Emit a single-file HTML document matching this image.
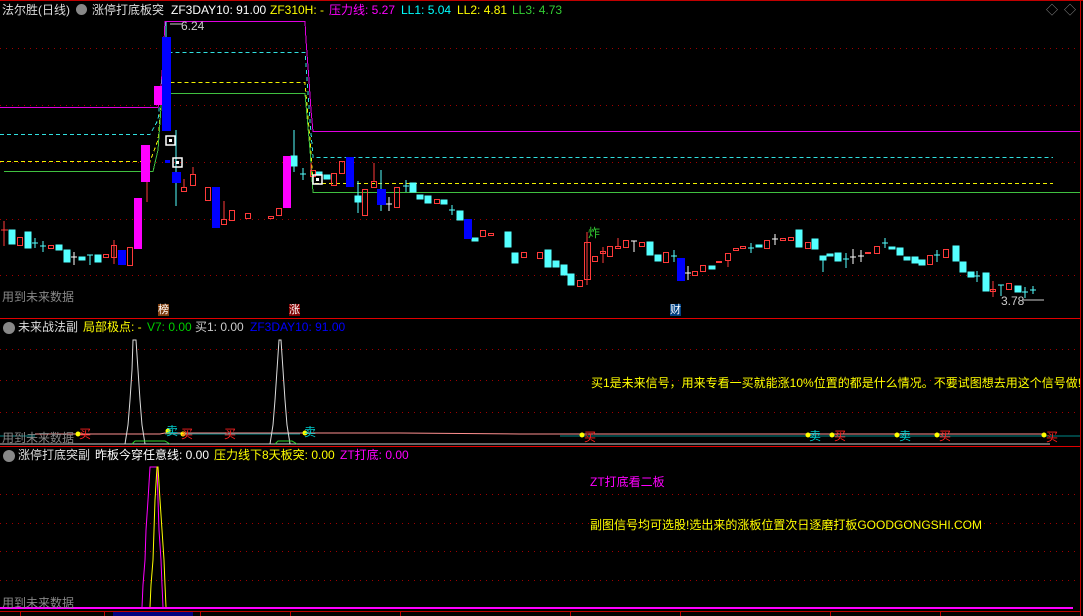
<!DOCTYPE html>
<html><head><meta charset="utf-8"><style>
html,body{margin:0;padding:0;background:#000;}
body{width:1083px;height:616px;overflow:hidden;position:relative;font-family:"Liberation Sans","Noto Sans CJK SC",sans-serif;font-size:12px;}
.t{position:absolute;white-space:nowrap;line-height:14px;}
.h{font-size:12px;top:3px;}
svg{position:absolute;left:0;top:0;}
.m{font-size:12px;}
</style></head><body>
<svg width="1083" height="616" viewBox="0 0 1083 616">
<g shape-rendering="crispEdges">
<line x1="0" y1="0.5" x2="1083" y2="0.5" stroke="#c00000"/>
<line x1="1080.5" y1="0" x2="1080.5" y2="616" stroke="#c00000"/>
<line x1="0" y1="318.5" x2="1080" y2="318.5" stroke="#e00000"/>
<line x1="0" y1="446.5" x2="1080" y2="446.5" stroke="#e00000"/>
<line x1="0" y1="611.5" x2="1080" y2="611.5" stroke="#c00000"/>
<g stroke="#a00000" stroke-dasharray="1,5">
<line x1="0" y1="48.5" x2="1080" y2="48.5"/><line x1="0" y1="105.5" x2="1080" y2="105.5"/>
<line x1="0" y1="162.5" x2="1080" y2="162.5"/><line x1="0" y1="219.5" x2="1080" y2="219.5"/>
<line x1="0" y1="275.5" x2="1080" y2="275.5"/>
<line x1="0" y1="349.5" x2="1080" y2="349.5"/><line x1="0" y1="380.5" x2="1080" y2="380.5"/><line x1="0" y1="412.5" x2="1080" y2="412.5"/>
<line x1="0" y1="494.5" x2="1080" y2="494.5"/><line x1="0" y1="523.5" x2="1080" y2="523.5"/><line x1="0" y1="551.5" x2="1080" y2="551.5"/><line x1="0" y1="580.5" x2="1080" y2="580.5"/>
</g>
<g stroke="#c00000"><line x1="20.5" y1="611" x2="20.5" y2="616"/><line x1="104.5" y1="611" x2="104.5" y2="616"/><line x1="200.5" y1="611" x2="200.5" y2="616"/><line x1="290.5" y1="611" x2="290.5" y2="616"/><line x1="400.5" y1="611" x2="400.5" y2="616"/><line x1="570.5" y1="611" x2="570.5" y2="616"/><line x1="680.5" y1="611" x2="680.5" y2="616"/><line x1="830.5" y1="611" x2="830.5" y2="616"/><line x1="940.5" y1="611" x2="940.5" y2="616"/></g>
<rect x="113" y="612" width="80" height="4" fill="#000080"/>
<polyline points="0,107.5 158,107.5 160,100 163,60 165,21.5 305,21.5 306,40 309,80 311,110 313,131.5 1080,131.5" fill="none" stroke="#e000e0"/>
<polyline points="0,134.5 150,134.5 158,120 165,52.5 305,52.5 310,120 313,157.5 1053,157.5" fill="none" stroke="#30e0e0" stroke-dasharray="4,3"/>
<polyline points="0,161.5 150,161.5 158,140 163,82.5 305,82.5 310,140 313,183.5 1053,183.5" fill="none" stroke="#f0f000" stroke-dasharray="4,3"/>
<polyline points="4,171.5 153,171.5 158,150 162,93.5 305,93.5 310,150 313,192.5 1080,192.5" fill="none" stroke="#40c040"/>
</g>
<g stroke-width="1">
<g fill="#54ffff" stroke="#54ffff">
<rect x="9" y="230" width="6" height="14"/><rect x="25" y="232" width="6" height="16"/>
<line x1="35" y1="238" x2="35" y2="248"/><line x1="32" y1="243" x2="38" y2="243"/>
<line x1="43" y1="241" x2="43" y2="252"/><line x1="40" y1="246" x2="46" y2="246"/>
<rect x="56" y="245" width="6" height="5"/><rect x="64" y="250" width="6" height="12"/>
<rect x="79" y="257" width="6" height="3"/><line x1="90" y1="255" x2="90" y2="265"/><line x1="87" y1="255" x2="93" y2="255"/>
<rect x="95" y="255" width="6" height="7"/>
<rect x="291" y="156" width="6" height="10"/><line x1="294" y1="130" x2="294" y2="172"/>
<line x1="176" y1="130" x2="176" y2="206"/>
<line x1="303" y1="168" x2="303" y2="180"/><line x1="300" y1="174" x2="306" y2="174"/>
<rect x="316" y="172" width="6" height="2"/><rect x="324" y="175" width="6" height="4"/>
<rect x="355" y="196" width="6" height="6"/><line x1="358" y1="181" x2="358" y2="213"/>
<line x1="381" y1="170" x2="381" y2="211"/>
<line x1="406" y1="180" x2="406" y2="192"/><line x1="403" y1="186" x2="409" y2="186"/>
<rect x="410" y="183" width="6" height="9"/><rect x="417" y="195" width="6" height="4"/><rect x="425" y="196" width="6" height="7"/>
<rect x="441" y="200" width="6" height="4"/><line x1="452" y1="205" x2="452" y2="215"/><line x1="449" y1="210" x2="455" y2="210"/>
<rect x="457" y="211" width="6" height="9"/><rect x="472" y="238" width="6" height="3"/>
<rect x="505" y="232" width="6" height="15"/><rect x="512" y="253" width="6" height="10"/>
<rect x="545" y="250" width="6" height="17"/><rect x="553" y="261" width="6" height="6"/><rect x="561" y="265" width="6" height="10"/><rect x="568" y="274" width="6" height="11"/>
<rect x="647" y="242" width="6" height="13"/><rect x="655" y="255" width="6" height="6"/>
<line x1="674" y1="250" x2="674" y2="262"/><line x1="671" y1="256" x2="677" y2="256"/>
<rect x="709" y="266" width="6" height="3"/><line x1="751" y1="243" x2="751" y2="253"/><line x1="748" y1="248" x2="754" y2="248"/>
<rect x="756" y="245" width="6" height="2"/><rect x="796" y="230" width="6" height="17"/><rect x="812" y="239" width="6" height="10"/>
<rect x="820" y="256" width="6" height="4"/><line x1="823" y1="256" x2="823" y2="272"/><rect x="827" y="254" width="6" height="2"/><rect x="835" y="253" width="6" height="8"/>
<line x1="846" y1="253" x2="846" y2="268"/><line x1="843" y1="259" x2="849" y2="259"/>
<line x1="885" y1="238" x2="885" y2="248"/><line x1="882" y1="243" x2="888" y2="243"/>
<rect x="889" y="247" width="6" height="2"/><rect x="897" y="248" width="6" height="7"/><rect x="904" y="257" width="6" height="3"/><rect x="912" y="257" width="6" height="6"/><rect x="919" y="260" width="6" height="5"/>
<line x1="937" y1="250" x2="937" y2="262"/><line x1="934" y1="255" x2="940" y2="255"/>
<rect x="953" y="246" width="6" height="15"/><rect x="960" y="262" width="6" height="10"/><rect x="968" y="272" width="6" height="5"/>
<line x1="977" y1="271" x2="977" y2="282"/><line x1="974" y1="276" x2="980" y2="276"/>
<rect x="983" y="273" width="6" height="18"/><line x1="1001" y1="285" x2="1001" y2="296"/><line x1="998" y1="285" x2="1004" y2="285"/>
<rect x="1015" y="286" width="6" height="6"/><line x1="1025" y1="287" x2="1025" y2="298"/><line x1="1022" y1="292" x2="1028" y2="292"/>
<line x1="1033" y1="286" x2="1033" y2="294"/><line x1="1030" y1="290" x2="1036" y2="290"/>
</g>
<g fill="none" stroke="#ff3a3a">
<line x1="4" y1="221" x2="4" y2="246"/><line x1="1" y1="230" x2="8" y2="230"/>
<rect x="17.5" y="237.5" width="5" height="8"/><rect x="48.5" y="245.5" width="5" height="3"/>
<rect x="103.5" y="254.5" width="5" height="3"/><rect x="111.5" y="245.5" width="5" height="12"/><line x1="114" y1="240" x2="114" y2="264"/>
<rect x="127.5" y="247.5" width="5" height="18"/>
<line x1="147" y1="180" x2="147" y2="202"/>
<rect x="181.5" y="187.5" width="5" height="4"/><line x1="184" y1="179" x2="184" y2="187"/>
<rect x="190.5" y="174.5" width="5" height="11"/><line x1="193" y1="167" x2="193" y2="174"/>
<rect x="205.5" y="187.5" width="5" height="13"/><rect x="221.5" y="219.5" width="5" height="5"/>
<rect x="229.5" y="210.5" width="5" height="10"/><line x1="224" y1="201" x2="224" y2="219"/>
<rect x="245.5" y="213.5" width="5" height="5"/><rect x="268.5" y="216.5" width="5" height="2"/><rect x="276.5" y="208.5" width="5" height="7"/>
<rect x="310.5" y="170.5" width="5" height="6"/><line x1="311" y1="163" x2="311" y2="170"/>
<rect x="331.5" y="173.5" width="5" height="12"/><rect x="339.5" y="161.5" width="5" height="12"/>
<rect x="362.5" y="189.5" width="5" height="26"/><rect x="371.5" y="181.5" width="5" height="6"/><line x1="374" y1="163" x2="374" y2="181"/>
<rect x="394.5" y="187.5" width="5" height="20"/>
<rect x="434.5" y="199.5" width="5" height="4"/><rect x="480.5" y="230.5" width="5" height="6"/><rect x="488.5" y="233.5" width="5" height="2"/>
<rect x="521.5" y="252.5" width="5" height="5"/>
<rect x="537.5" y="252.5" width="5" height="6"/><rect x="577.5" y="280.5" width="5" height="6"/>
<rect x="584.5" y="242.5" width="6" height="37"/><line x1="587" y1="232" x2="587" y2="285"/>
<rect x="592.5" y="256.5" width="5" height="5"/><rect x="600.5" y="251.5" width="5" height="2"/><line x1="603" y1="247" x2="603" y2="263"/>
<rect x="607.5" y="246.5" width="5" height="10"/><rect x="615.5" y="246.5" width="5" height="2"/><line x1="618" y1="238" x2="618" y2="246"/>
<rect x="623.5" y="240.5" width="5" height="7"/><rect x="639.5" y="242.5" width="5" height="4"/>
<rect x="663.5" y="252.5" width="5" height="10"/>
<rect x="692.5" y="271.5" width="5" height="4"/><rect x="700.5" y="265.5" width="5" height="6"/>
<rect x="716.5" y="261.5" width="5" height="1"/><rect x="725.5" y="253.5" width="5" height="7"/><line x1="728" y1="260" x2="728" y2="267"/>
<rect x="733.5" y="248.5" width="5" height="2"/><rect x="740.5" y="246.5" width="5" height="2"/>
<rect x="764.5" y="240.5" width="5" height="8"/><rect x="780.5" y="238.5" width="5" height="2"/><rect x="788.5" y="237.5" width="5" height="3"/>
<rect x="805.5" y="242.5" width="5" height="6"/>
<rect x="865.5" y="252.5" width="5" height="1"/><rect x="874.5" y="246.5" width="5" height="7"/>
<rect x="927.5" y="255.5" width="5" height="9"/><rect x="943.5" y="249.5" width="5" height="8"/>
<rect x="990.5" y="289.5" width="5" height="2"/><line x1="993" y1="281" x2="993" y2="297"/>
<rect x="1006.5" y="283.5" width="5" height="6"/>
</g>
<g stroke="#fff">
<line x1="74" y1="252" x2="74" y2="265"/><line x1="71" y1="257" x2="77" y2="257"/>
<line x1="389" y1="197" x2="389" y2="211"/><line x1="386" y1="204" x2="392" y2="204"/>
<line x1="634" y1="241" x2="634" y2="252"/><line x1="631" y1="241" x2="637" y2="241"/>
<line x1="688" y1="266" x2="688" y2="280"/><line x1="685" y1="273" x2="691" y2="273"/>
<line x1="775" y1="234" x2="775" y2="245"/><line x1="772" y1="239" x2="778" y2="239"/>
<line x1="853" y1="249" x2="853" y2="264"/><line x1="850" y1="257" x2="856" y2="257"/>
<line x1="861" y1="250" x2="861" y2="262"/><line x1="858" y1="256" x2="864" y2="256"/>
</g>
<g fill="#0000ff"><rect x="118" y="250" width="8" height="15"/><rect x="162" y="37" width="9" height="94"/><rect x="165" y="160" width="5" height="3"/><rect x="172" y="172" width="9" height="11"/><rect x="212" y="187" width="8" height="41"/><rect x="346" y="157" width="8" height="30"/><rect x="377" y="189" width="9" height="16"/><rect x="464" y="219" width="8" height="20"/><rect x="677" y="258" width="8" height="23"/></g>
<line x1="166" y1="22" x2="166" y2="37" stroke="#54ffff"/>
<g fill="#ff00ff"><rect x="134" y="198" width="8" height="51"/><rect x="141" y="145" width="9" height="37"/><rect x="154" y="86" width="8" height="19"/><rect x="283" y="156" width="8" height="52"/></g>
<g fill="none" stroke="#fff" stroke-width="1.5"><rect x="166" y="136" width="9" height="9"/><rect x="173" y="158" width="9" height="9"/><rect x="313" y="175" width="9" height="9"/></g>
<g fill="#fff"><rect x="169" y="139" width="3" height="3"/><rect x="176" y="161" width="3" height="3"/><rect x="316" y="178" width="3" height="3"/></g>
<polyline points="170,24 182,24" stroke="#ccc"/>
<line x1="1023" y1="300" x2="1044" y2="300" stroke="#ccc"/>
</g>
<g fill="none">
<polyline points="0,436 35,436" stroke="#008888"/>
<polyline points="35,434 160,434 165,433 175,433 300,433 400,433 520,434 1046,434" stroke="#ff9090"/>
<polyline points="165,434 300,434" stroke="#008888"/>
<polyline points="560,436 1080,436" stroke="#008888"/>
<polyline points="0,444 1050,444" stroke="#ccc"/>
<polyline points="125,444 128,425 130,400 132,370 133,340 136,340 138,370 140,400 142,425 145,444" stroke="#ddd"/>
<polyline points="270,444 273,425 275,400 277,370 279,340 281,340 283,370 285,400 287,425 290,444" stroke="#ddd"/>
<polyline points="132,444 135,441 165,441 170,444" stroke="#30d030"/>
<polyline points="275,444 278,441 292,441 297,444" stroke="#30d030"/>
<polyline points="0,608 1073,608" stroke="#ff00ff" stroke-width="2"/>
<polyline points="142,607 143,585 145,560 146,530 148,500 150,467 157,467 158,500 159,530 161,560 162,585 163,607" stroke="#ff00ff"/>
<polyline points="150,607 151,585 153,560 154,530 155,500 157,467 158,467 160,500 162,530 164,560 165,585 166,607" stroke="#ffff00"/>
</g>
<g fill="#ffff00"><circle cx="78" cy="434" r="2.5"/><circle cx="168" cy="431" r="2.5"/><circle cx="183" cy="434" r="2.5"/><circle cx="305" cy="433" r="2.5"/><circle cx="582" cy="435" r="2.5"/><circle cx="808" cy="435" r="2.5"/><circle cx="832" cy="435" r="2.5"/><circle cx="897" cy="435" r="2.5"/><circle cx="937" cy="435" r="2.5"/><circle cx="1044" cy="435" r="2.5"/></g>
</svg>
<div class="t h" style="left:2px;color:#ddd">法尔胜(日线)</div>
<div class="t" style="left:76px;top:4px;width:11px;height:11px;border-radius:6px;background:#888"></div>
<div class="t h" style="left:92px;color:#ddd">涨停打底板突</div>
<div class="t h" style="left:171px;color:#fff">ZF3DAY10: 91.00</div>
<div class="t h" style="left:270px;color:#ff0">ZF310H: -</div>
<div class="t h" style="left:329px;color:#f0f">压力线: 5.27</div>
<div class="t h" style="left:401px;color:#0ff">LL1: 5.04</div>
<div class="t h" style="left:457px;color:#ff0">LL2: 4.81</div>
<div class="t h" style="left:512px;color:#3c3">LL3: 4.73</div>
<div class="t" style="left:1046px;top:3px;color:#888">◇</div><div class="t" style="left:1064px;top:3px;color:#888">◇</div>
<div class="t" style="left:181px;top:19px;color:#ccc">6.24</div>
<div class="t" style="left:1001px;top:294px;color:#ccc">3.78</div>
<div class="t" style="left:588px;top:226px;color:#3c3">炸</div>
<div class="t" style="left:2px;top:290px;color:#888">用到未来数据</div>
<div class="t" style="left:158px;top:304px;background:#804010;color:#fff;font-size:11px;line-height:12px">榜</div>
<div class="t" style="left:289px;top:304px;background:#800000;color:#fff;font-size:11px;line-height:12px">涨</div>
<div class="t" style="left:670px;top:304px;background:#004080;color:#fff;font-size:11px;line-height:12px">财</div>
<div class="t" style="left:3px;top:322px;width:12px;height:12px;border-radius:6px;background:#888"></div>
<div class="t h" style="left:18px;top:320px;color:#ddd">未来战法副</div>
<div class="t h" style="left:83px;top:320px;color:#ff0">局部极点: -</div>
<div class="t h" style="left:147px;top:320px;color:#0c0">V7: 0.00</div>
<div class="t h" style="left:195px;top:320px;color:#ccc">买1: 0.00</div>
<div class="t h" style="left:250px;top:320px;color:#0000ff">ZF3DAY10: 91.00</div>
<div class="t h" style="left:591px;top:376px;color:#ff0">买1是未来信号，用来专看一买就能涨10%位置的都是什么情况。不要试图想去用这个信号做!</div>
<div class="t h" style="left:2px;top:431px;color:#888">用到未来数据</div>
<div class="t m" style="left:79px;top:427px;color:#f22">买</div>
<div class="t m" style="left:166px;top:424px;color:#0cc">卖</div><div class="t m" style="left:181px;top:427px;color:#f22">买</div>
<div class="t m" style="left:224px;top:427px;color:#f22">买</div><div class="t m" style="left:304px;top:425px;color:#0cc">卖</div>
<div class="t m" style="left:584px;top:430px;color:#f22">买</div><div class="t m" style="left:809px;top:429px;color:#0cc">卖</div>
<div class="t m" style="left:834px;top:429px;color:#f22">买</div><div class="t m" style="left:899px;top:429px;color:#0cc">卖</div>
<div class="t m" style="left:939px;top:429px;color:#f22">买</div><div class="t m" style="left:1046px;top:430px;color:#f22">买</div>
<div class="t" style="left:3px;top:450px;width:12px;height:12px;border-radius:6px;background:#888"></div>
<div class="t h" style="left:18px;top:448px;color:#ddd">涨停打底突副</div>
<div class="t h" style="left:95px;top:448px;color:#fff">昨板今穿任意线: 0.00</div>
<div class="t h" style="left:214px;top:448px;color:#ff0">压力线下8天板突: 0.00</div>
<div class="t h" style="left:340px;top:448px;color:#f0f">ZT打底: 0.00</div>
<div class="t" style="left:590px;top:475px;color:#f0f">ZT打底看二板</div>
<div class="t" style="left:590px;top:518px;color:#ff0">副图信号均可选股!选出来的涨板位置次日逐磨打板GOODGONGSHI.COM</div>
<div class="t h" style="left:2px;top:596px;color:#888">用到未来数据</div>
</body></html>
